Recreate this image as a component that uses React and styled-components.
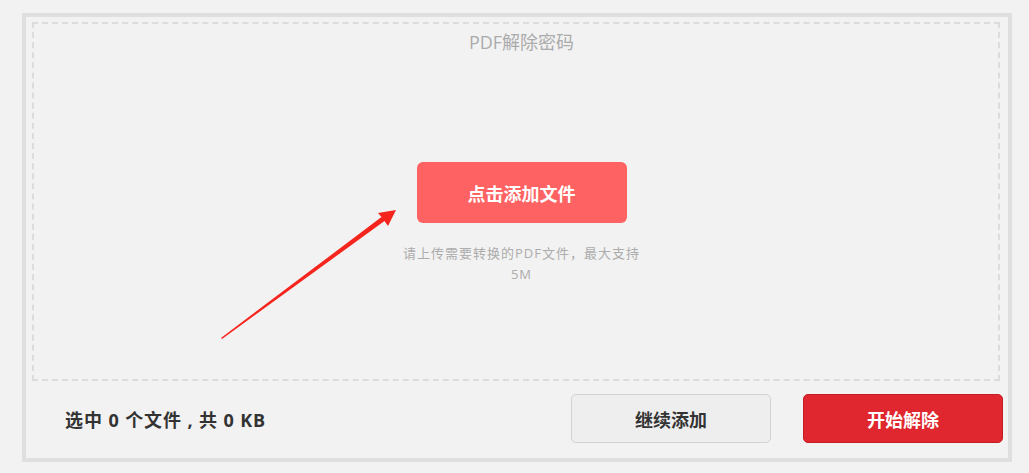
import React from 'react'
import styled, { createGlobalStyle } from 'styled-components'

const GlobalStyle = createGlobalStyle`
  html, body {
    margin: 0;
    padding: 0;
    background: #f2f2f2;
    font-family: "Open Sans", "Noto Sans CJK SC", sans-serif;
  }
`

const Page = styled.div`
  padding: 13px 17px 11px 22px;
`

const Panel = styled.div`
  border: 4px solid #dfdfdf;
  display: flex;
  flex-direction: column;
`

const DropZone = styled.div`
  position: relative;
  margin: 5px 8px 0 6px;
  padding-left: 11px;
  height: 355px;
  border: 2px dashed #dcdcdc;
  display: flex;
  flex-direction: column;
  align-items: center;
`

const Title = styled.div`
  margin-top: 8px;
  font-size: 18px;
  line-height: 20px;
  color: #ababab;
`

const AddButton = styled.button`
  margin-top: 110px;
  width: 210px;
  height: 61px;
  border: none;
  border-radius: 6px;
  background: #ff6262;
  color: #fff;
  font-family: inherit;
  font-size: 18px;
  font-weight: 700;
  cursor: pointer;
`

const Hint = styled.p`
  margin: 20px 0 0;
  width: 248px;
  text-align: center;
  font-size: 13px;
  line-height: 21px;
  letter-spacing: 1px;
  color: #acacac;
`

const Arrow = styled.svg`
  position: absolute;
  left: 184px;
  top: 184px;
`

const Footer = styled.div`
  display: flex;
  align-items: center;
  height: 77px;
  padding: 0 5px 2px 39px;
  box-sizing: border-box;
`

const Summary = styled.div`
  flex: 1;
  font-size: 18px;
  font-weight: 700;
  letter-spacing: 0.9px;
  color: #333;
`

const Actions = styled.div`
  display: flex;
  gap: 32px;
`

const ActionButton = styled.button`
  width: 200px;
  height: 49px;
  border-radius: 5px;
  font-family: inherit;
  font-size: 18px;
  font-weight: 700;
  cursor: pointer;
  border: 1px solid ${p => (p.$primary ? '#c41d25' : '#d2d2d2')};
  background: ${p => (p.$primary ? '#e0262e' : '#eeeeee')};
  color: ${p => (p.$primary ? '#fff' : '#333')};
`

const App = () => (
  <Page>
    <GlobalStyle />
    <Panel>
      <DropZone>
        <Title>PDF解除密码</Title>
        <AddButton>点击添加文件</AddButton>
        <Hint>请上传需要转换的PDF文件，最大支持5M</Hint>
        <Arrow width="182" height="134" viewBox="0 0 182 134">
          <polygon
            points="3,130 163.5,9 160,5 178,2 170,18 166.5,13 4,131"
            fill="#f5241c"
          />
        </Arrow>
      </DropZone>
      <Footer>
        <Summary>选中 0 个文件 , 共 0 KB</Summary>
        <Actions>
          <ActionButton>继续添加</ActionButton>
          <ActionButton $primary>开始解除</ActionButton>
        </Actions>
      </Footer>
    </Panel>
  </Page>
)

export default App
